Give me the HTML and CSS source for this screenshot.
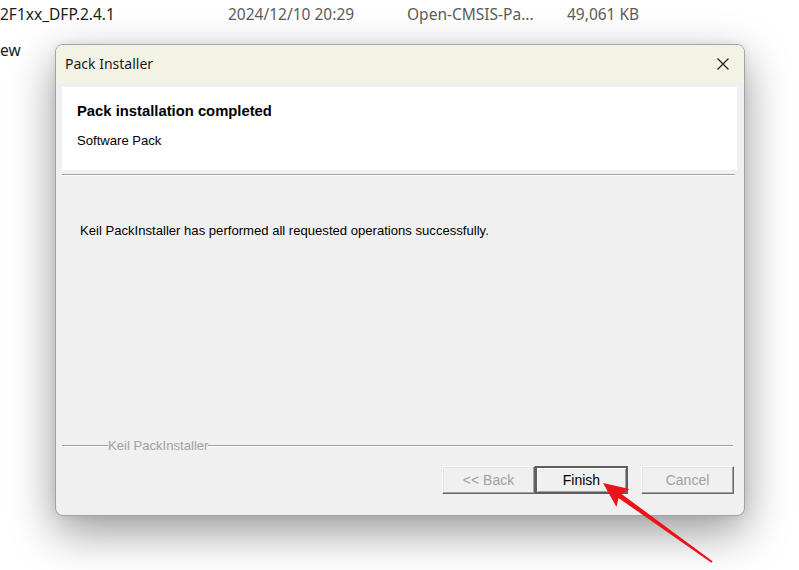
FILE: index.html
```html
<!DOCTYPE html>
<html lang="en">
<head>
    <meta charset="UTF-8">
    <meta name="viewport" content="width=device-width, initial-scale=1.0">
    <title>Pack Installer</title>
    <link rel="stylesheet" href="styles.css">
</head>
<body>

<div class="desktop">
    <div class="file-row">
        <span class="file-name">2F1xx_DFP.2.4.1</span>
        <span class="file-date">2024/12/10 20:29</span>
        <span class="file-type">Open-CMSIS-Pa...</span>
        <span class="file-size">49,061 KB</span>
    </div>
    <div class="file-row second">
        <span class="file-name">ew</span>
    </div>

    <div class="dialog">
        <div class="titlebar">
            <span class="title">Pack Installer</span>
            <span class="close">
                <svg width="12" height="12" viewBox="0 0 12 12">
                    <path d="M0.5 0.5 L11.5 11.5 M11.5 0.5 L0.5 11.5" stroke="#1a1a1a" stroke-width="1.1" fill="none"/>
                </svg>
            </span>
        </div>
        <div class="content">
            <div class="banner">
                <h2>Pack installation completed</h2>
                <p>Software Pack</p>
            </div>
            <div class="rule"></div>
            <div class="message">Keil PackInstaller has performed all requested operations successfully.</div>
            <div class="brand"><span>Keil PackInstaller</span></div>
            <div class="actions">
                <button class="btn" disabled>&lt;&lt; Back</button>
                <button class="btn default">Finish</button>
                <button class="btn cancel" disabled>Cancel</button>
            </div>
        </div>
    </div>

    <!-- red pointer towards the Finish button -->
    <svg class="pointer" width="799" height="570" viewBox="0 0 799 570">
        <polygon fill="#e8131b" points="603,483 629.5,489 621.5,494 712.6,561.2 711.4,562.8 618.5,498 616.5,507"/>
    </svg>
</div>

</body>
</html>
```

FILE: styles.css
```css
* {
    margin: 0;
    padding: 0;
    box-sizing: border-box;
}

body {
    background: #fff;
    overflow: hidden;
}

.desktop {
    position: relative;
    width: 799px;
    height: 570px;
    overflow: hidden;
    background: #fff;
}

.file-row {
    display: flex;
    height: 28px;
    align-items: center;
    font-family: "Noto Sans", sans-serif;
    font-size: 15.5px;
    color: #5c5c5c;
    white-space: nowrap;
}

.file-row.second {
    height: 44px;
}

.file-name {
    width: 228px;
    color: #1b1b1b;
}

.file-date {
    width: 179px;
}

.file-type {
    width: 160px;
}

.dialog {
    position: absolute;
    left: 55px;
    top: 44px;
    width: 690px;
    height: 472px;
    display: flex;
    flex-direction: column;
    background: #f0f0f0;
    border: 1px solid #a3a3a3;
    border-radius: 8px;
    overflow: hidden;
    box-shadow: 0 16px 46px rgba(0, 0, 0, 0.4), 0 0 8px rgba(0, 0, 0, 0.08);
}

.titlebar {
    height: 38px;
    flex: none;
    display: flex;
    align-items: center;
    justify-content: space-between;
    padding: 0 15px 1px 9px;
    background: #f2f3e4;
    font-family: "Noto Sans", sans-serif;
    font-size: 14px;
    color: #1a1a1a;
}

.close {
    display: flex;
    padding-top: 1px;
}

.content {
    flex: 1;
    display: flex;
    flex-direction: column;
    padding: 4px 7px 20px 6px;
    font-family: "Liberation Sans", Arial, sans-serif;
    font-size: 13.1px;
    color: #000;
}

.banner {
    height: 83px;
    background: #fff;
    padding: 16px 0 0 15px;
}

.banner h2 {
    font-size: 14.8px;
    font-weight: bold;
    line-height: 17px;
}

.banner p {
    margin-top: 13px;
    line-height: 16px;
}

.rule {
    margin: 4px 2px 0 0;
    border-top: 1px solid #a0a0a0;
    border-bottom: 1px solid #fff;
}

.message {
    flex: 1;
    margin-top: 47px;
    padding-left: 18px;
    line-height: 16px;
}

.brand {
    display: flex;
    align-items: center;
    margin-right: 4px;
    height: 14px;
    color: #a0a0a0;
    line-height: 14px;
}

.brand::before,
.brand::after {
    content: "";
    height: 0;
    border-top: 1px solid #a0a0a0;
    border-bottom: 1px solid #fff;
}

.brand::before {
    width: 46px;
}

.brand::after {
    flex: 1;
}

.actions {
    display: flex;
    justify-content: flex-end;
    margin: 13px 3px 1px 0;
}

.btn {
    width: 93px;
    height: 28px;
    font-family: "Liberation Sans", Arial, sans-serif;
    font-size: 14px;
    color: #a0a0a0;
    background: #f0f0f0;
    border: 1px solid;
    border-color: #fff #696969 #696969 #fff;
    box-shadow: inset -1px -1px 0 #a0a0a0, inset 1px 1px 0 #e3e3e3;
}

.btn.default {
    color: #000;
    border: 2px solid #5e5e5e;
    box-shadow: inset 1px 1px 0 #fff, inset -1px -1px 0 #a0a0a0;
}

.btn.cancel {
    margin-left: 13px;
}

.pointer {
    position: absolute;
    left: 0;
    top: 0;
    pointer-events: none;
}
```
